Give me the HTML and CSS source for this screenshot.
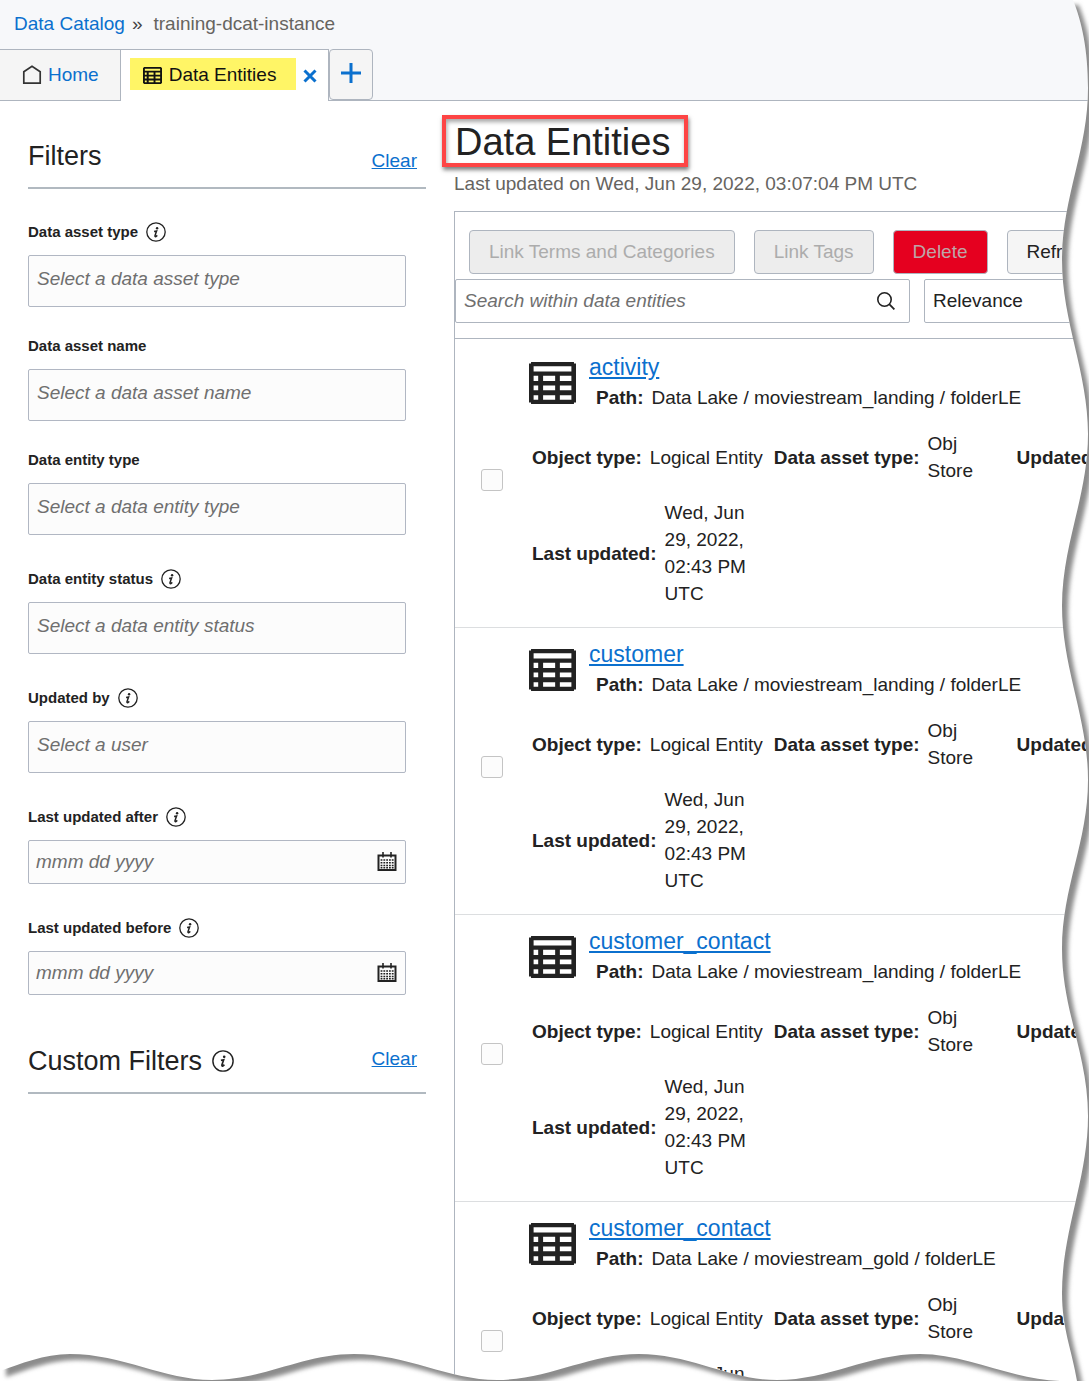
FILE: index.html
```html
<!DOCTYPE html>
<html lang="en">
<head>
<meta charset="utf-8">
<meta name="viewport" content="width=device-width, initial-scale=1">
<title>Data Entities</title>
<link rel="stylesheet" href="styles.css">
</head>
<body>
<svg class="sprite" aria-hidden="true">
  <symbol id="info" viewBox="0 0 20 20">
    <circle cx="10" cy="10" r="9.2" fill="none" stroke="currentColor" stroke-width="1.3"/>
    <circle cx="11.1" cy="6.2" r="1.2" fill="currentColor"/>
    <path d="M8.1 9.4 L10.6 8.9 L9 13.6 Q8.8 15 9.9 14.5 L11.3 13.4" fill="none" stroke="currentColor" stroke-width="1.5"/>
  </symbol>
  <symbol id="table" viewBox="0 0 46 41">
    <path fill="currentColor" fill-rule="evenodd" d="M2 0H44V1.5H46V39.5H44V41H2V39.5H0V1.5H2ZM4.5 4V9.2H41.5V4ZM4.5 13.5V18.5H9V13.5ZM13.8 13.5V18.5H25.6V13.5ZM30.2 13.5V18.5H41.5V13.5ZM4.5 23V27.5H9V23ZM13.8 23V27.5H25.6V23ZM30.2 23V27.5H41.5V23ZM4.5 32.5V37H9V32.5ZM13.8 32.5V37H25.6V32.5ZM30.2 32.5V37H41.5V32.5Z"/>
  </symbol>
  <symbol id="calendar" viewBox="0 0 20 20">
    <path d="M1.5 3.5H18.5V18H1.5Z" fill="none" stroke="currentColor" stroke-width="2"/>
    <path d="M6 0V5.5M14 0V5.5" stroke="currentColor" stroke-width="1.6"/>
    <path d="M3.6 8H16.6M3.6 10.7H16.6M3.6 13.4H16.6M3.6 15.8H16.6" stroke="currentColor" stroke-width="1.5" stroke-dasharray="1.8 1"/>
  </symbol>
</svg>

<div class="app">
  <header class="topbar">
    <nav class="crumbs" aria-label="Breadcrumb">
      <a href="#">Data Catalog</a><span class="sep">»</span><span class="current">training-dcat-instance</span>
    </nav>
  </header>

  <nav class="tabs" aria-label="Open tabs">
    <a class="tab" href="#">
      <svg class="home-icon" viewBox="0 0 20 20" aria-hidden="true"><path d="M1.8 18.2V6.8L10 1.3L18.2 6.8V18.2Z" fill="none" stroke="currentColor" stroke-width="1.7"/></svg>
      Home
    </a>
    <div class="tab active">
      <a class="tab-name" href="#"><svg class="tab-icon" aria-hidden="true"><use href="#table"/></svg>Data Entities</a>
      <button class="tab-close" type="button" aria-label="Close tab"><svg viewBox="0 0 14 14"><path d="M1.5 1.5L12.5 12.5M12.5 1.5L1.5 12.5" stroke="currentColor" stroke-width="3"/></svg></button>
    </div>
    <button class="tab-add" type="button" aria-label="Add tab"><svg viewBox="0 0 20 20"><path d="M10 0V20M0 10H20" stroke="currentColor" stroke-width="3"/></svg></button>
  </nav>

  <div class="columns">
    <aside class="filters">
      <div class="filter-head">
        <h2>Filters</h2>
        <a href="#">Clear</a>
      </div>
      <form>
        <div class="field">
          <div class="label"><label for="asset-type">Data asset type</label><svg class="info"><use href="#info"/></svg></div>
          <input class="box" id="asset-type" type="text" placeholder="Select a data asset type">
        </div>
        <div class="field plain">
          <div class="label"><label for="asset-name">Data asset name</label></div>
          <input class="box" id="asset-name" type="text" placeholder="Select a data asset name">
        </div>
        <div class="field plain">
          <div class="label"><label for="entity-type">Data entity type</label></div>
          <input class="box" id="entity-type" type="text" placeholder="Select a data entity type">
        </div>
        <div class="field">
          <div class="label"><label for="entity-status">Data entity status</label><svg class="info"><use href="#info"/></svg></div>
          <input class="box" id="entity-status" type="text" placeholder="Select a data entity status">
        </div>
        <div class="field">
          <div class="label"><label for="updated-by">Updated by</label><svg class="info"><use href="#info"/></svg></div>
          <input class="box" id="updated-by" type="text" placeholder="Select a user">
        </div>
        <div class="field">
          <div class="label"><label for="after">Last updated after</label><svg class="info"><use href="#info"/></svg></div>
          <div class="date"><input id="after" type="text" placeholder="mmm dd yyyy"><button type="button" aria-label="Pick a date"><svg><use href="#calendar"/></svg></button></div>
        </div>
        <div class="field">
          <div class="label"><label for="before">Last updated before</label><svg class="info"><use href="#info"/></svg></div>
          <div class="date"><input id="before" type="text" placeholder="mmm dd yyyy"><button type="button" aria-label="Pick a date"><svg><use href="#calendar"/></svg></button></div>
        </div>
      </form>
      <div class="filter-head custom">
        <h2>Custom Filters<svg class="info large"><use href="#info"/></svg></h2>
        <a href="#">Clear</a>
      </div>
    </aside>

    <main class="content">
      <h1>Data Entities</h1>
      <p class="updated">Last updated on Wed, Jun 29, 2022, 03:07:04 PM UTC</p>
      <section class="panel">
        <div class="actions">
          <button class="btn" type="button" disabled>Link Terms and Categories</button>
          <button class="btn" type="button" disabled>Link Tags</button>
          <button class="btn danger" type="button" disabled>Delete</button>
          <button class="btn" type="button">Refresh</button>
        </div>
        <div class="search-row">
          <div class="search">
            <input type="search" aria-label="Search within data entities" placeholder="Search within data entities">
            <button type="button" aria-label="Search"><svg viewBox="0 0 18 18"><circle cx="7.5" cy="7.5" r="6.7" fill="none" stroke="currentColor" stroke-width="1.6"/><path d="M12.2 12.2L17.4 17.4" stroke="currentColor" stroke-width="1.8"/></svg></button>
          </div>
          <select class="sort" aria-label="Sort by"><option>Relevance</option></select>
        </div>
        <ul class="entities">
          <li>
            <input type="checkbox" aria-label="Select activity">
            <div class="entity">
              <div class="entity-head">
                <svg class="entity-icon" aria-hidden="true"><use href="#table"/></svg>
                <div>
                  <a class="entity-name" href="#">activity</a>
                  <p class="path"><b>Path:</b> <span>Data Lake / moviestream_landing / folderLE</span></p>
                </div>
              </div>
              <dl class="details">
                <div><dt>Object type:</dt><dd>Logical Entity</dd></div>
                <div><dt>Data asset type:</dt><dd class="store">Obj Store</dd></div>
                <div><dt>Updated by:</dt></div>
              </dl>
              <dl class="details">
                <div><dt>Last updated:</dt><dd class="when">Wed, Jun 29, 2022, 02:43 PM UTC</dd></div>
              </dl>
            </div>
          </li>
          <li>
            <input type="checkbox" aria-label="Select customer">
            <div class="entity">
              <div class="entity-head">
                <svg class="entity-icon" aria-hidden="true"><use href="#table"/></svg>
                <div>
                  <a class="entity-name" href="#">customer</a>
                  <p class="path"><b>Path:</b> <span>Data Lake / moviestream_landing / folderLE</span></p>
                </div>
              </div>
              <dl class="details">
                <div><dt>Object type:</dt><dd>Logical Entity</dd></div>
                <div><dt>Data asset type:</dt><dd class="store">Obj Store</dd></div>
                <div><dt>Updated by:</dt></div>
              </dl>
              <dl class="details">
                <div><dt>Last updated:</dt><dd class="when">Wed, Jun 29, 2022, 02:43 PM UTC</dd></div>
              </dl>
            </div>
          </li>
          <li>
            <input type="checkbox" aria-label="Select customer_contact in landing">
            <div class="entity">
              <div class="entity-head">
                <svg class="entity-icon" aria-hidden="true"><use href="#table"/></svg>
                <div>
                  <a class="entity-name" href="#">customer_contact</a>
                  <p class="path"><b>Path:</b> <span>Data Lake / moviestream_landing / folderLE</span></p>
                </div>
              </div>
              <dl class="details">
                <div><dt>Object type:</dt><dd>Logical Entity</dd></div>
                <div><dt>Data asset type:</dt><dd class="store">Obj Store</dd></div>
                <div><dt>Updated by:</dt></div>
              </dl>
              <dl class="details">
                <div><dt>Last updated:</dt><dd class="when">Wed, Jun 29, 2022, 02:43 PM UTC</dd></div>
              </dl>
            </div>
          </li>
          <li>
            <input type="checkbox" aria-label="Select customer_contact in gold">
            <div class="entity">
              <div class="entity-head">
                <svg class="entity-icon" aria-hidden="true"><use href="#table"/></svg>
                <div>
                  <a class="entity-name" href="#">customer_contact</a>
                  <p class="path"><b>Path:</b> <span>Data Lake / moviestream_gold / folderLE</span></p>
                </div>
              </div>
              <dl class="details">
                <div><dt>Object type:</dt><dd>Logical Entity</dd></div>
                <div><dt>Data asset type:</dt><dd class="store">Obj Store</dd></div>
                <div><dt>Updated by:</dt></div>
              </dl>
              <dl class="details">
                <div><dt>Last updated:</dt><dd class="when">Wed, Jun 29, 2022, 02:43 PM UTC</dd></div>
              </dl>
            </div>
          </li>
        </ul>
      </section>
    </main>
  </div>

  <!-- Torn paper edge over the right and bottom sides -->
  <svg class="torn" viewBox="0 0 1089 1381" preserveAspectRatio="none" aria-hidden="true">
    <defs>
      <path id="sheet" d="M0 -1H1073V0C1082 22 1088 50 1088 88C1088 150 1062 198 1062 260C1062 322 1088 372 1088 434C1088 496 1062 544 1062 606C1062 668 1088 718 1088 780C1088 842 1062 887 1062 949C1062 1011 1088 1054 1088 1116C1088 1178 1062 1231 1062 1293C1062 1329 1072 1350 1077 1381H1060C1012 1380 968 1354 920 1354C868 1354 829 1380 777 1380C729 1380 691 1354 639 1354C587 1354 549 1380 497 1380C449 1380 406 1354 354 1354C302 1354 264 1380 212 1380C164 1380 122 1354 70 1354C44 1354 20 1364 0 1371Z"/>
      <clipPath id="outside"><path clip-rule="evenodd" d="M-1 -1H1090V1382H-1ZM0 -1H1073V0C1082 22 1088 50 1088 88C1088 150 1062 198 1062 260C1062 322 1088 372 1088 434C1088 496 1062 544 1062 606C1062 668 1088 718 1088 780C1088 842 1062 887 1062 949C1062 1011 1088 1054 1088 1116C1088 1178 1062 1231 1062 1293C1062 1329 1072 1350 1077 1381H1060C1012 1380 968 1354 920 1354C868 1354 829 1380 777 1380C729 1380 691 1354 639 1354C587 1354 549 1380 497 1380C449 1380 406 1354 354 1354C302 1354 264 1380 212 1380C164 1380 122 1354 70 1354C44 1354 20 1364 0 1371Z"/></clipPath>
      <filter id="soft" filterUnits="userSpaceOnUse" x="-20" y="-20" width="1140" height="1430"><feGaussianBlur stdDeviation="2"/></filter>
    </defs>
    <g clip-path="url(#outside)">
      <rect width="1089" height="1381" fill="#fff"/>
      <use href="#sheet" x="6" y="6" fill="#8c8c8c" filter="url(#soft)"/>
    </g>
  </svg>
</div>
</body>
</html>
```
FILE: styles.css
```css
* {
  box-sizing: border-box;
}

body {
  margin: 0;
  background: #fff;
  color: #222;
  font: 19px/22px "Liberation Sans", Arial, sans-serif;
}

h1, h2, p, ul, dl, dd {
  margin: 0;
  padding: 0;
  font-weight: 400;
}

a {
  color: #0b70ce;
}

input, button, select {
  font: inherit;
  color: inherit;
}

input::placeholder {
  color: #6f6f6f;
  font-style: italic;
  opacity: 1;
}

.sprite {
  display: none;
}

.app {
  position: relative;
  height: 100vh;
  overflow: hidden;
}

/* Top bar and tabs */
.topbar {
  height: 49px;
  padding: 13px 14px;
  background: #f7f8fa;
}

.crumbs a {
  text-decoration: none;
}

.crumbs .sep {
  margin: 0 11px 0 7px;
  color: #444;
}

.crumbs .current {
  color: #66645f;
}

.tabs {
  display: flex;
  height: 52px;
  background: linear-gradient(#aeb5bf, #aeb5bf) bottom / 100% 1px no-repeat #f7f8fa;
}

.tab {
  display: flex;
  align-items: center;
  gap: 6px;
  padding: 0 21px 0 22px;
  border: 1px solid #aeb5bf;
  border-left: 0;
  background: #f5f5f5;
  text-decoration: none;
}

.tab.active {
  gap: 7px;
  padding: 0 11px 3px 9px;
  border-bottom: 0;
  background: #fff;
}

.home-icon {
  width: 20px;
  height: 20px;
  color: #333;
}

.tab-name {
  display: flex;
  align-items: center;
  gap: 7px;
  height: 32px;
  padding: 2px 20px 0 13px;
  background: #fff566;
  color: #111;
  text-decoration: none;
}

.tab-icon {
  width: 19px;
  height: 17px;
}

.tab-close, .tab-add, .date button, .search button {
  padding: 0;
  border: 0;
  background: none;
}

.tab-close {
  display: flex;
  padding-top: 4px;
  color: #0b70ce;
}

.tab-close svg {
  width: 14px;
  height: 14px;
}

.tab-add {
  display: flex;
  align-items: center;
  justify-content: center;
  width: 44px;
  height: 51px;
  padding-bottom: 3px;
  border: 1px solid #aeb5bf;
  border-radius: 4px;
  background: #f5f5f5;
  color: #0b70ce;
}

.tab-add svg {
  width: 20px;
  height: 20px;
}

/* Page columns */
.columns {
  display: flex;
  gap: 28px;
  padding-left: 28px;
}

.filters {
  flex: 0 0 398px;
  padding-top: 39px;
}

.filter-head {
  display: flex;
  justify-content: space-between;
  align-items: flex-end;
  margin-bottom: 30px;
  padding: 0 9px 15px 0;
  border-bottom: 2px solid #b1b9c0;
}

.filter-head.custom {
  align-items: center;
  margin-top: 50px;
}

.filter-head.custom a {
  padding-bottom: 4px;
}

.filter-head h2 {
  display: flex;
  align-items: center;
  gap: 10px;
  font-size: 27px;
  line-height: 32px;
}

.info {
  width: 20px;
  height: 20px;
}

.info.large {
  width: 22px;
  height: 22px;
}

.field {
  margin: 31px 20px 0 0;
}

.field:first-child {
  margin-top: 30px;
}

.field.plain {
  margin-top: 26px;
}

.label {
  display: flex;
  align-items: center;
  gap: 8px;
  height: 26px;
  margin-bottom: 10px;
  font-size: 15px;
  font-weight: 700;
}

.box, .date {
  display: flex;
  width: 100%;
  border: 1px solid #b1b7c3;
  border-radius: 2px;
  background: #fcfcfc;
}

.box {
  height: 52px;
  padding: 0 8px 5px;
}

.date {
  align-items: center;
  height: 44px;
  padding: 0 8px 0 7px;
}

.date input, .search input {
  flex: 1;
  min-width: 0;
  padding: 0;
  border: 0;
  background: none;
}

.date button, .search button {
  display: flex;
}

.date svg {
  width: 20px;
  height: 20px;
}

/* Entity list */
.content {
  flex: 1;
  min-width: 0;
}

h1 {
  width: fit-content;
  margin: 14px 0 0 -12px;
  padding: 3px 14px 0 9px;
  border: 4px solid #fd4444;
  box-shadow: 1px 3px 4px rgba(0, 0, 0, 0.5), inset 1px 3px 4px rgba(0, 0, 0, 0.35);
  font-size: 38px;
  line-height: 41px;
}

.updated {
  margin: 6px 0 16px;
  color: #66645f;
}

.panel {
  border: 1px solid #aeb5bf;
  border-width: 1px 0 0 1px;
}

.actions {
  display: flex;
  gap: 19px;
  padding: 18px 0 5px 14px;
}

.btn {
  flex: none;
  height: 44px;
  padding: 0 19px;
  border: 1px solid #aeb5bf;
  border-radius: 4px;
  background: #f5f5f5;
}

.btn:disabled {
  background: #ededed;
  color: #acacac;
}

.btn.danger {
  background: #e5001f;
  color: #bda5a8;
}

.search-row {
  display: flex;
  gap: 14px;
  padding-bottom: 15px;
  border-bottom: 1px solid #aeb5bf;
}

.search {
  display: flex;
  align-items: center;
  flex: 1;
  height: 44px;
  padding: 0 14px 0 8px;
  border: 1px solid #aeb5bf;
  border-radius: 2px;
}

.search svg {
  width: 18px;
  height: 18px;
}

.sort {
  width: 165px;
  height: 44px;
  padding: 0 8px;
  border: 1px solid #aeb5bf;
  border-radius: 2px;
  background: #fff;
  appearance: none;
}

.entities {
  padding-top: 2px;
  list-style: none;
}

.entities li {
  display: flex;
  align-items: center;
  gap: 26px;
  padding: 11px 0 20px 26px;
  border-bottom: 1px solid #dcdee0;
}

.entities input {
  flex: none;
  width: 22px;
  height: 22px;
  margin: 0;
  border: 1px solid #c4c4c4;
  border-radius: 3px;
  background: #fcfcfc;
  appearance: none;
}

.entity-head {
  display: flex;
  gap: 13px;
}

.entity-icon {
  width: 47px;
  height: 42px;
  margin-top: 10px;
}

.entity-name {
  display: block;
  width: fit-content;
  font-size: 23px;
  line-height: 30px;
}

.path {
  display: flex;
  gap: 8px;
  padding: 2px 0 0 7px;
  line-height: 27px;
  white-space: nowrap;
}

.details {
  display: flex;
  gap: 11px;
  margin-top: 15px;
  padding-left: 3px;
  line-height: 27px;
  white-space: nowrap;
}

.entity-head + .details {
  margin-top: 19px;
}

.details div {
  display: flex;
  align-items: center;
  gap: 8px;
}

dt, b {
  font-weight: 700;
}

.details .store {
  width: 78px;
  white-space: normal;
}

.details .when {
  width: 88px;
  white-space: normal;
}

.torn {
  position: absolute;
  inset: 0;
  width: 100%;
  height: 100%;
  pointer-events: none;
}
```
